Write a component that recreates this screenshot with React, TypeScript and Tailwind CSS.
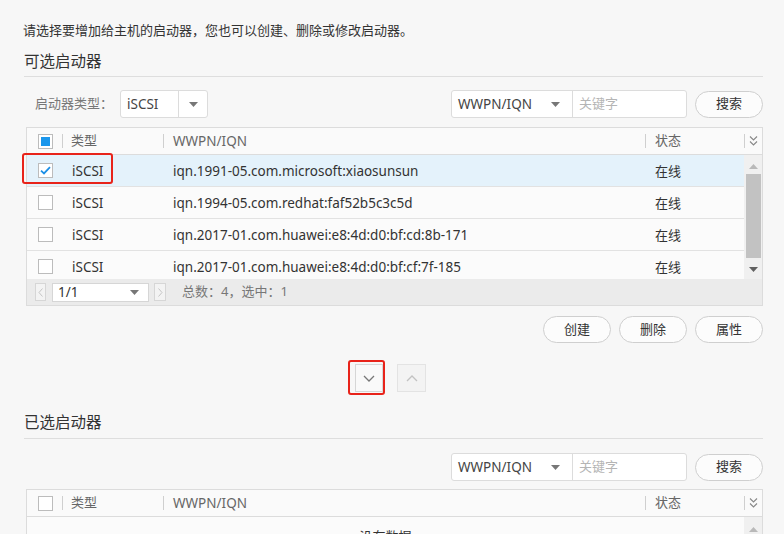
import React from "react";

type CheckState = "none" | "partial" | "checked";

function Caret({ className = "" }: { className?: string }) {
  return (
    <svg width="9" height="5" viewBox="0 0 9 5" className={className}>
      <path d="M0 0h9L4.5 5z" fill="currentColor" />
    </svg>
  );
}

function Checkbox({ state }: { state: CheckState }) {
  return (
    <span className="w-[15px] h-[15px] border border-[#bcbcbc] bg-white flex items-center justify-center">
      {state === "partial" && <span className="w-[9px] h-[9px] bg-[#1b97ec]" />}
      {state === "checked" && (
        <svg width="11" height="9" viewBox="0 0 11 9">
          <path d="M1 4.6 4 7.4 10 1.2" fill="none" stroke="#1b8fe6" strokeWidth="1.8" />
        </svg>
      )}
    </span>
  );
}

function ChevronsDown() {
  return (
    <svg width="9" height="12" viewBox="0 0 9 12" className="text-[#888]">
      <path d="M1 1.5 4.5 5 8 1.5M1 6.5 4.5 10 8 6.5" fill="none" stroke="currentColor" strokeWidth="1.1" />
    </svg>
  );
}

function SearchBar() {
  return (
    <div className="flex items-center justify-end gap-[8px]">
      <div className="flex h-[28px] border border-[#dcdcdc] rounded-[3px] bg-white">
        <div className="w-[121px] flex items-center justify-between pl-[6px] pr-[12px] border-r border-[#dcdcdc] text-[13.5px] text-[#444]">
          <span>WWPN/IQN</span>
          <Caret className="text-[#777]" />
        </div>
        <div className="w-[113px] flex items-center pl-[6px] text-[13px] text-[#b5b5b5]">关键字</div>
      </div>
      <button className="w-[68px] h-[27px] rounded-full border border-[#cfcfcf] bg-[#fcfcfc] text-[13px] text-[#333]">搜索</button>
    </div>
  );
}

function HeaderRow({ check }: { check: CheckState }) {
  const divider = <span className="w-px h-[14px] bg-[#cfcfcf]" />;
  return (
    <div className="flex h-[27px] items-center bg-[#fafafa] border-b border-[#dcdcdc] text-[13px] text-[#666]">
      <div className="w-[35px] pl-[11px]">
        <Checkbox state={check} />
      </div>
      <div className="w-[101px] flex items-center">
        {divider}
        <span className="pl-[8px]">类型</span>
      </div>
      <div className="flex-1 flex items-center">
        {divider}
        <span className="pl-[9px] text-[13.5px]">WWPN/IQN</span>
      </div>
      <div className="w-[99px] flex items-center">
        {divider}
        <span className="pl-[9px]">状态</span>
      </div>
      <div className="w-[18px] flex items-center">
        {divider}
        <span className="pl-[4px] flex">
          <ChevronsDown />
        </span>
      </div>
    </div>
  );
}

const rows = [
  { iqn: "iqn.1991-05.com.microsoft:xiaosunsun", checked: true },
  { iqn: "iqn.1994-05.com.redhat:faf52b5c3c5d", checked: false },
  { iqn: "iqn.2017-01.com.huawei:e8:4d:d0:bf:cd:8b-171", checked: false },
  { iqn: "iqn.2017-01.com.huawei:e8:4d:d0:bf:cf:7f-185", checked: false },
];

function Row({ iqn, checked }: { iqn: string; checked: boolean }) {
  return (
    <div
      className={`flex h-[32px] items-center border-b border-[#e2e2e2] text-[13.5px] text-[#333] ${
        checked ? "bg-[#e4f2fb]" : "bg-[#fbfbfb]"
      }`}
    >
      <div className="w-[35px] pl-[11px]">
        <Checkbox state={checked ? "checked" : "none"} />
      </div>
      <div className="w-[101px] pl-[10px] pt-[2px]">iSCSI</div>
      <div className="flex-1 pl-[10px] pt-[2px]">{iqn}</div>
      <div className="w-[99px] pl-[10px] pt-[2px] text-[13px]">在线</div>
    </div>
  );
}

function Pager() {
  return (
    <div className="flex h-[26px] items-center bg-[#ebebeb] text-[13px]">
      <span className="ml-[8px] w-[11px] h-[18px] border border-[#d6d6d6] bg-[#f3f3f3] flex items-center justify-center">
        <svg width="5" height="9" viewBox="0 0 5 9">
          <path d="M4.5 0.5 1 4.5 4.5 8.5" fill="none" stroke="#c4c4c4" />
        </svg>
      </span>
      <span className="ml-[6px] w-[97px] h-[19px] border border-[#d6d6d6] bg-white flex items-center justify-between pl-[5px] pr-[9px] text-[13.5px] text-[#333]">
        <span>1/1</span>
        <Caret className="text-[#777]" />
      </span>
      <span className="ml-[5px] w-[12px] h-[18px] border border-[#d6d6d6] bg-[#f3f3f3] flex items-center justify-center">
        <svg width="5" height="9" viewBox="0 0 5 9">
          <path d="M0.5 0.5 4 4.5 0.5 8.5" fill="none" stroke="#c4c4c4" />
        </svg>
      </span>
      <span className="ml-[16px] text-[#777]">总数：4，选中：1</span>
    </div>
  );
}

export default function App() {
  return (
    <div className="w-[784px] h-[534px] overflow-hidden bg-[#f7f7f7] pl-[24px] pr-[21px] pt-[20px] font-['Noto_Sans','Noto_Sans_CJK_SC',sans-serif]">
      <p className="-ml-px leading-[20px] text-[13px] text-[#333]">
        请选择要增加给主机的启动器，您也可以创建、删除或修改启动器。
      </p>

      <div className="mt-[11px] h-[26px] leading-[20px] text-[15.5px] text-[#333] border-b border-[#dedede]">可选启动器</div>

      <div className="mt-[13px] flex items-center justify-between">
        <div className="flex items-center">
          <span className="ml-[11px] w-[85px] text-[13px] text-[#777]">启动器类型：</span>
          <div className="flex h-[28px] w-[88px] border border-[#dcdcdc] rounded-[3px] bg-white">
            <div className="w-[58px] flex items-center pl-[6px] border-r border-[#dcdcdc] text-[13.5px] text-[#444]">iSCSI</div>
            <div className="flex-1 flex items-center justify-center">
              <Caret className="text-[#777]" />
            </div>
          </div>
        </div>
        <SearchBar />
      </div>

      <div className="relative mt-[9px] ml-[2px] border border-[#dcdcdc] bg-[#fbfbfb]">
        <HeaderRow check="partial" />
        <div className="flex h-[124px] overflow-hidden">
          <div className="flex-1">
            {rows.map((r) => (
              <Row key={r.iqn} iqn={r.iqn} checked={r.checked} />
            ))}
          </div>
          <div className="w-[18px] bg-[#f0f0f0] flex flex-col items-center pt-[9px]">
            <svg width="9" height="5" viewBox="0 0 9 5">
              <path d="M0 5h9L4.5 0z" fill="#b9b9b9" />
            </svg>
            <span className="mt-[5px] w-[15px] h-[84px] bg-[#c2c2c2]" />
            <svg width="9" height="5" viewBox="0 0 9 5" className="mt-[9px]">
              <path d="M0 0h9L4.5 5z" fill="#606060" />
            </svg>
          </div>
        </div>
        <Pager />
        <span className="absolute left-[-5px] top-[25px] w-[91px] h-[31px] border-2 border-[#e8231a] rounded-[3px]" />
      </div>

      <div className="mt-[10px] flex justify-end gap-[8px]">
        {["创建", "删除", "属性"].map((t) => (
          <button key={t} className="w-[68px] h-[27px] rounded-full border border-[#cfcfcf] bg-[#fcfcfc] text-[13px] text-[#333]">
            {t}
          </button>
        ))}
      </div>

      <div className="mt-[21px] ml-[331px] flex gap-[14px]">
        <div className="relative">
          <button className="w-[28px] h-[28px] border border-[#d6d6d6] bg-[#f9f9f9] flex items-center justify-center">
            <svg width="12" height="7" viewBox="0 0 12 7">
              <path d="M1 1 6 6 11 1" fill="none" stroke="#777" strokeWidth="1.3" />
            </svg>
          </button>
          <span className="absolute left-[-7px] top-[-4px] right-[-2px] bottom-[-3px] border-2 border-[#e8231a] rounded-[3px]" />
        </div>
        <button className="w-[29px] h-[28px] border border-[#e3e3e3] bg-[#f3f3f3] flex items-center justify-center">
          <svg width="12" height="7" viewBox="0 0 12 7">
            <path d="M1 6 6 1 11 6" fill="none" stroke="#c2c2c2" strokeWidth="1.3" />
          </svg>
        </button>
      </div>

      <div className="mt-[20px] h-[27px] leading-[20px] text-[15.5px] text-[#333] border-b border-[#dedede]">已选启动器</div>

      <div className="mt-[14px]">
        <SearchBar />
      </div>

      <div className="mt-[8px] ml-[2px] border border-[#dcdcdc] bg-[#fbfbfb]">
        <HeaderRow check="none" />
        <div className="flex h-[60px]">
          <div className="flex-1 pt-[9px] text-center text-[13px] text-[#333] leading-[20px]">没有数据</div>
          <div className="w-[18px] bg-[#f0f0f0] flex flex-col items-center pt-[10px]">
            <svg width="9" height="5" viewBox="0 0 9 5">
              <path d="M0 5h9L4.5 0z" fill="#b9b9b9" />
            </svg>
          </div>
        </div>
      </div>
    </div>
  );
}
